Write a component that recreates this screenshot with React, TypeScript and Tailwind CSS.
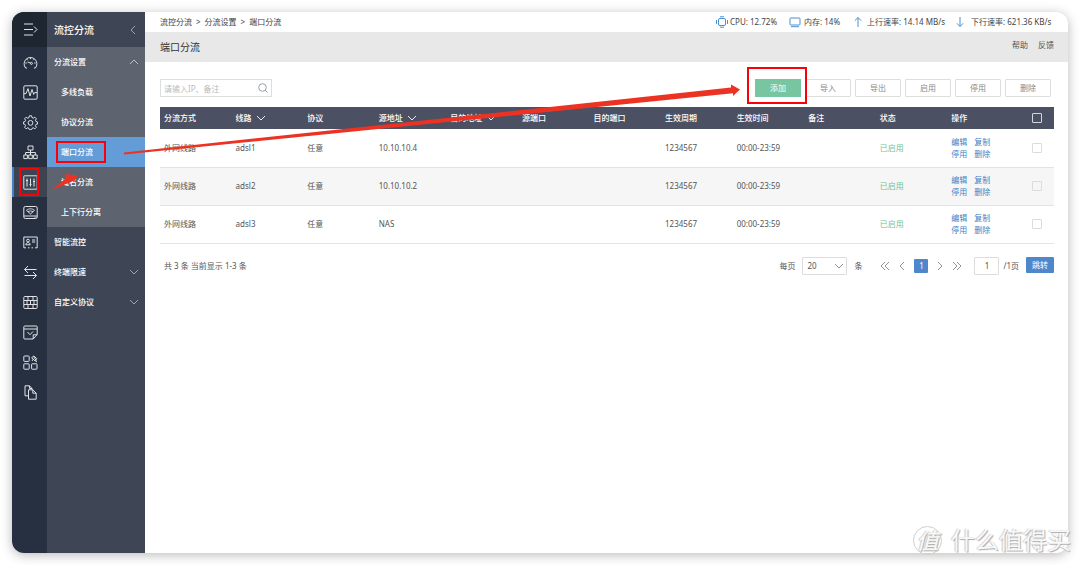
import { useState } from 'react'
import type { ReactNode } from 'react'

const iconos: { nombre: string; dibujo: ReactNode }[] = [
  { nombre: '系统概况', dibujo: <><path d="M4 13H2.600A6.400 6.400 0 1 1 12.400 13H11" /><path d="M7.500 2.500v1.600M3.800 4.200l1 1M11.200 4.200l-1 1M2.400 8h1.400M12.600 8h-1.400" /><path d="M4.500 7l3 1" /><circle cx="8.400" cy="8.400" r="1" /></> },
  { nombre: '监控', dibujo: <><rect x=".8" y=".8" width="13.400" height="13.400" rx="1.200" /><path d="M1 8.600h2L5 3.600l2 7.400 2-6.600 1.700 5 .9-1.800H14" /></> },
  { nombre: '系统设置', dibujo: <><path d="M6.400.8h2.200l.4 1.800 1.300.6 1.600-1 1.500 1.500-1 1.600.6 1.300 1.600.4v2l-1.600.4-.6 1.300 1 1.600-1.500 1.500-1.600-1-1.300.6-.4 1.300H6.400L6 13.400l-1.300-.6-1.600 1-1.500-1.500 1-1.600L2 9.400.4 9V7l1.600-.4.6-1.300-1-1.600 1.500-1.500 1.600 1L6 2.600z" /><circle cx="7.500" cy="7.900" r="2.400" /></> },
  { nombre: '网络设置', dibujo: <><rect x="5" y="1" width="5" height="4" /><rect x=".8" y="10" width="3.600" height="3.600" /><rect x="5.700" y="10" width="3.600" height="3.600" /><rect x="10.600" y="10" width="3.600" height="3.600" /><path d="M7.500 5v5M2.600 10V7.500h9.800V10" /></> },
  { nombre: '流控分流', dibujo: <><rect x=".8" y=".8" width="13.400" height="13.400" rx=".6" /><path d="M4 3.500v8M7.500 3.500v8M11 3.500v8M3 5.500h2M6.500 9.500h2M10 6.500h2" /></> },
  { nombre: '无线', dibujo: <><rect x=".8" y="1.500" width="13.400" height="12" rx="1.500" /><path d="M1 11h13M11.500 12.300h1" /><path d="M3.500 5.300c2.500-2 5.500-2 8 0L7.500 9z" /><path d="M5 6.900c1.600-1.200 3.400-1.200 5 0" /></> },
  { nombre: '认证计费', dibujo: <><path d="M3 12.800H.8V2h13.400v10.800H12M5 12.800h1.500M8.500 12.800H10" /><circle cx="5" cy="5.600" r="1.400" /><path d="M2.800 9.800c.3-3 4.100-3 4.400 0zM9 5h3.200M9 7h3.200" /></> },
  { nombre: '行为管控', dibujo: <path d="M13.500 4.500H1.500L5 1M1.500 4.500L5 8M1.500 10.500h12L10 7M13.500 10.500L10 14" /> },
  { nombre: '安全设置', dibujo: <><rect x=".8" y="1.500" width="13.400" height="12" rx="1" /><path d="M1 5.500h13M1 9.500h13M5 1.500v4M10 1.500v4M4 5.500v4M11 5.500v4M7.500 5.500v4M5 9.500v4M10 9.500v4" /></> },
  { nombre: '高级应用', dibujo: <><path d="M14.200 9.500V2a1 1 0 0 0-1-1H1.800a1 1 0 0 0-1 1v11a1 1 0 0 0 1 1h8.400zM1 4h13M10.200 14V9.800h4" /><path d="M4.500 7l2.500 2.700L10 6.500" /></> },
  { nombre: '应用中心', dibujo: <><rect x=".8" y="1" width="5.400" height="5.400" rx=".6" /><rect x=".8" y="8.800" width="5.400" height="5.400" rx=".6" /><rect x="8.600" y="8.800" width="5.400" height="5.400" rx=".6" /><path d="M8.600 2.800l2.200-1.800 3 2.600-1.800 2.200zM10.300 4.200L9 6M10.500 1.500l2.800 4M12 5.500l2 1.500" /></> },
  { nombre: '系统日志', dibujo: <><path d="M5.500 10.800H2V.8h4.500L9 3.500v1.300M6.500.8v2.700H9" /><path d="M5.500 4.800h4.300l3.400 3.400v6H5.500zM9.800 4.800v3.400h3.400" /></> },
]

const submenu = ['多线负载', '协议分流', '端口分流', '域名分流', '上下行分离']

const columnas = ['分流方式', '线路', '协议', '源地址', '目的地址', '源端口', '目的端口', '生效周期', '生效时间', '备注', '状态', '操作']
const ordenables = ['线路', '源地址', '目的地址']

const reglas = [
  { id: 1, linea: 'adsl1', origen: '10.10.10.4' },
  { id: 2, linea: 'adsl2', origen: '10.10.10.2' },
  { id: 3, linea: 'adsl3', origen: 'NAS' },
]

const flechas = {
  arriba: 'M1 6l4-4 4 4',
  abajo: 'M1 2l4 4 4-4',
  izquierda: 'M7 0L3 4l4 4',
  derecha: 'M3 0l4 4-4 4',
  inicio: 'M5 0L1 4l4 4M9 0L5 4l4 4',
  fin: 'M1 0l4 4-4 4M5 0l4 4-4 4',
}

function Flecha({ tipo, className = '' }: { tipo: keyof typeof flechas; className?: string }) {
  return (
    <svg viewBox="0 -1 10 10" className={`h-[10px] w-[10px] shrink-0 ${className}`} fill="none" stroke="currentColor" strokeWidth="0.9" aria-hidden="true">
      <path d={flechas[tipo]} />
    </svg>
  )
}

function Icono({ children }: { children: ReactNode }) {
  return <svg viewBox="0 0 15 15" className="h-[15px] w-[15px] shrink-0" fill="none" stroke="currentColor" strokeWidth="1" strokeLinejoin="round" aria-hidden="true">{children}</svg>
}

function Riel() {
  return (
    <nav className="w-[35px] shrink-0 bg-[#263040] text-[#dfe3e8]">
      <button aria-label="展开菜单" className="flex h-[35px] w-full items-center justify-center bg-[#1e2632] pl-[2px]">
        <Icono><path d="M1 2h9M1 7.500h9M1 13h9M11 4.500l3 3-3 3" /></Icono>
      </button>
      {iconos.map((i) => (
        <div key={i.nombre} className="relative">
          <a href="#" aria-label={i.nombre} className={`flex h-[30px] items-center justify-center ${i.nombre === '流控分流' ? 'border-l-2 border-[#4382c9] bg-[#3c4452]' : 'pl-[2px]'}`}>
            <Icono>{i.dibujo}</Icono>
          </a>
          {i.nombre === '流控分流' && <span className="pointer-events-none absolute inset-y-[1px] right-[8px] left-[7px] border-2 border-[#fb0007]" />}
        </div>
      ))}
    </nav>
  )
}

function Menu() {
  return (
    <aside className="w-[98px] shrink-0 bg-[#3e4655] font-medium text-white">
      <div className="flex h-[35px] items-center justify-between pr-[7px] pl-[7px] text-[10px]">
        流控分流 <Flecha tipo="izquierda" className="text-[#a9afb9]" />
      </div>
      <div className="bg-[#5d6470]">
        <button className="flex h-[30px] w-full items-center justify-between pr-[6px] pl-[7px]">分流设置 <Flecha tipo="arriba" className="text-[#c5c9cf]" /></button>
        {submenu.map((s) => (
          <a key={s} href="#" className={`flex h-[30px] items-center pl-[14px] ${s === '端口分流' ? 'bg-[#639cd6]' : ''}`}>
            {s === '端口分流' ? (
              <span className="relative">{s}<span className="pointer-events-none absolute -inset-y-[5px] -right-[13px] -left-[5px] border-2 border-[#fb0007]" /></span>
            ) : s}
          </a>
        ))}
      </div>
      <a href="#" className="flex h-[30px] items-center pl-[7px]">智能流控</a>
      {['终端限速', '自定义协议'].map((s) => (
        <button key={s} className="flex h-[30px] w-full items-center justify-between pr-[6px] pl-[7px]">{s} <Flecha tipo="abajo" className="text-[#a9afb9]" /></button>
      ))}
    </aside>
  )
}

function Estado() {
  return (
    <div className="flex items-center [&_svg]:text-[#4a90d2]">
      <span className="flex w-[73px] items-center gap-[2px]">
        <svg viewBox="0 0 12 12" className="h-3 w-3" fill="none" stroke="currentColor" aria-hidden="true"><rect x="2.500" y="2.500" width="7" height="7" rx="1.500" /><path d="M4 .8h4M4 11.200h4M.5 4v4M11.500 4v4" /></svg>
        CPU: 12.72%
      </span>
      <span className="flex w-[64px] items-center gap-[3px]">
        <svg viewBox="0 0 12 12" className="h-3 w-3" fill="none" stroke="currentColor" aria-hidden="true"><rect x="1" y="2" width="10" height="7" rx=".8" /><path d="M2 10.700h8" /></svg>
        内存: 14%
      </span>
      <span className="flex w-[102px] items-center gap-1">
        <svg viewBox="0 0 10 12" className="h-3 w-[10px]" fill="none" stroke="currentColor" aria-hidden="true"><path d="M5 11V1.500M1.800 4.700L5 1.500l3.200 3.200" /></svg>
        上行速率: 14.14 MB/s
      </span>
      <span className="flex w-[99px] items-center gap-[6px]">
        <svg viewBox="0 0 10 12" className="h-3 w-[10px]" fill="none" stroke="currentColor" aria-hidden="true"><path d="M5 1v9.500M1.800 7.300L5 10.500l3.200-3.200" /></svg>
        下行速率: 621.36 KB/s
      </span>
    </div>
  )
}

function Tabla() {
  const [marcadas, setMarcadas] = useState<number[]>([])
  const casilla = 'block mx-auto h-[10px] w-[10px] appearance-none rounded-[1px] border checked:bg-[#4f87cd]'
  const alternar = (id: number) => setMarcadas((m) => (m.includes(id) ? m.filter((x) => x !== id) : [...m, id]))

  return (
    <table className="mt-[10px] w-full table-fixed border-collapse text-left">
      <thead>
        <tr className="h-[22px] bg-[#4b5063] text-white">
          {columnas.map((c) => (
            <th key={c} className="p-0 pl-1 font-medium">
              <span className="flex items-center gap-1 whitespace-nowrap">{c}{ordenables.includes(c) && <Flecha tipo="abajo" />}</span>
            </th>
          ))}
          <th className="w-[35px] p-0"><input type="checkbox" aria-label="全选" className={`${casilla} border-[#d5d7dc]`} checked={marcadas.length === reglas.length} onChange={(e) => setMarcadas(e.target.checked ? reglas.map((r) => r.id) : [])} /></th>
        </tr>
      </thead>
      <tbody>
        {reglas.map((r) => (
          <tr key={r.id} className="h-[38px] border-b border-[#e3e3e3] even:bg-[#f6f6f6] [&>td]:p-0 [&>td]:pl-1">
            <td>外网线路</td>
            <td>{r.linea}</td>
            <td>任意</td>
            <td>{r.origen}</td>
            <td></td>
            <td></td>
            <td></td>
            <td>1234567</td>
            <td>00:00-23:59</td>
            <td></td>
            <td className="text-[#6cc49a]">已启用</td>
            <td className="text-[#3c83c6]">
              <div className="grid w-[40px] grid-cols-2 gap-x-[6px] leading-[12px] whitespace-nowrap">
                {['编辑', '复制', '停用', '删除'].map((a) => <a key={a} href="#">{a}</a>)}
              </div>
            </td>
            <td className="!pl-0"><input type="checkbox" aria-label={`选择 ${r.linea}`} className={`${casilla} border-[#dcdcdc]`} checked={marcadas.includes(r.id)} onChange={() => alternar(r.id)} /></td>
          </tr>
        ))}
      </tbody>
    </table>
  )
}

function Paginacion() {
  return (
    <div className="mt-[13px] flex items-center justify-between pl-1">
      <p>共 3 条 当前显示 1-3 条</p>
      <div className="flex items-center">
        <label htmlFor="porPagina">每页</label>
        <div className="relative mr-[7px] ml-[7px]">
          <select id="porPagina" defaultValue="20" className="block h-[18px] w-[45px] appearance-none rounded-[1px] border border-[#dcdcdc] bg-white pl-1">
            <option>20</option>
            <option>50</option>
            <option>100</option>
          </select>
          <Flecha tipo="abajo" className="pointer-events-none absolute top-1 right-[3px] text-[#888]" />
        </div>
        条
        <div className="mr-[12px] ml-[18px] flex items-center gap-[7px] text-[#888]">
          <button aria-label="首页"><Flecha tipo="inicio" /></button>
          <button aria-label="上一页"><Flecha tipo="izquierda" /></button>
          <button className="h-[14px] w-[14px] rounded-[1px] bg-[#4f87cd] text-white">1</button>
          <button aria-label="下一页"><Flecha tipo="derecha" /></button>
          <button aria-label="末页"><Flecha tipo="fin" /></button>
        </div>
        <input aria-label="页码" defaultValue="1" className="mr-1 h-[18px] w-[25px] rounded-[1px] border border-[#dcdcdc] text-center" />
        /1页
        <button className="ml-[7px] h-4 w-[28px] self-start rounded-[1px] bg-[#4f87cd] text-white">跳转</button>
      </div>
    </div>
  )
}

export default function App() {
  return (
    <div className="relative flex min-h-screen overflow-hidden bg-white p-3 font-['Noto_Sans','Noto_Sans_CJK_SC',sans-serif] text-[8px] leading-[12px] text-[#555]">
      <div className="flex flex-1 overflow-hidden rounded-[12px] bg-white shadow-[0_2px_12px_rgba(0,0,0,0.28)]">
        <Riel />
        <Menu />
        <main className="min-w-0 flex-1">
          <div className="flex h-[20px] items-center justify-between pr-[14px] pl-[15px] text-[#444]">
            <div className="flex gap-1"><span>流控分流</span><span>&gt;</span><span>分流设置</span><span>&gt;</span><span>端口分流</span></div>
            <Estado />
          </div>
          <header className="flex h-[30px] items-center justify-between bg-[#e8e8e8] pr-[14px] pl-[15px]">
            <h1 className="text-[10px] text-[#333]">端口分流</h1>
            <div className="flex gap-[10px] pb-1"><a href="#">帮助</a><a href="#">反馈</a></div>
          </header>

          <div className="pt-[17px] pr-[14px] pl-[15px]">
            <div className="flex items-center justify-between">
              <div className="relative">
                <input aria-label="搜索" placeholder="请输入IP、备注" className="block h-[18px] w-[112px] border border-[#dedede] pr-4 pl-[3px] placeholder:text-[#bbb]" />
                <svg viewBox="0 0 10 10" className="absolute top-1 right-1 h-[10px] w-[10px]" fill="none" stroke="#8b95a3" strokeWidth="0.9" aria-hidden="true"><circle cx="4.500" cy="4.500" r="3.800" /><path d="M7.200 7.200l2.300 2.300" /></svg>
              </div>
              <div className="flex gap-1 pr-[3px] text-[#888]">
                <div className="relative">
                  <button className="block h-[18px] w-[46px] bg-[#77c5a1] text-white">添加</button>
                  <span className="pointer-events-none absolute -top-[12px] -right-[6px] -bottom-[7px] -left-[8px] border-2 border-[#fb0007]" />
                </div>
                {['导入', '导出', '启用', '停用', '删除'].map((b) => (
                  <button key={b} className="h-[18px] w-[46px] rounded-[1px] border border-[#dedede] bg-white">{b}</button>
                ))}
              </div>
            </div>
            <Tabla />
            <Paginacion />
          </div>
        </main>
      </div>

      {/* flechas de la guía */}
      <svg viewBox="0 0 1080 565" preserveAspectRatio="none" className="pointer-events-none absolute top-0 left-0 h-[565px] w-full" fill="#ec3323" aria-hidden="true">
        <path d="M124 152.500L731 87.500V84.500L740 89.500L733 96V93.300L124 154.500z" />
        <path d="M52 190L66.500 177.500L65.500 174L78 175.500L73.500 182.500L73 181z" />
      </svg>

      <div className="pointer-events-none absolute right-[9px] bottom-[10px] flex items-center gap-[9px] text-[#f8f8f8] [text-shadow:1px_1px_1px_#aaa,-1px_0_1px_#ccc]">
        <span className="flex h-[29px] w-[29px] items-center justify-center rounded-full border border-[#d0d0d0] text-[22px] leading-[28px] font-medium italic">值</span>
        <span className="text-[24px] leading-[30px]">什么值得买</span>
      </div>
    </div>
  )
}
